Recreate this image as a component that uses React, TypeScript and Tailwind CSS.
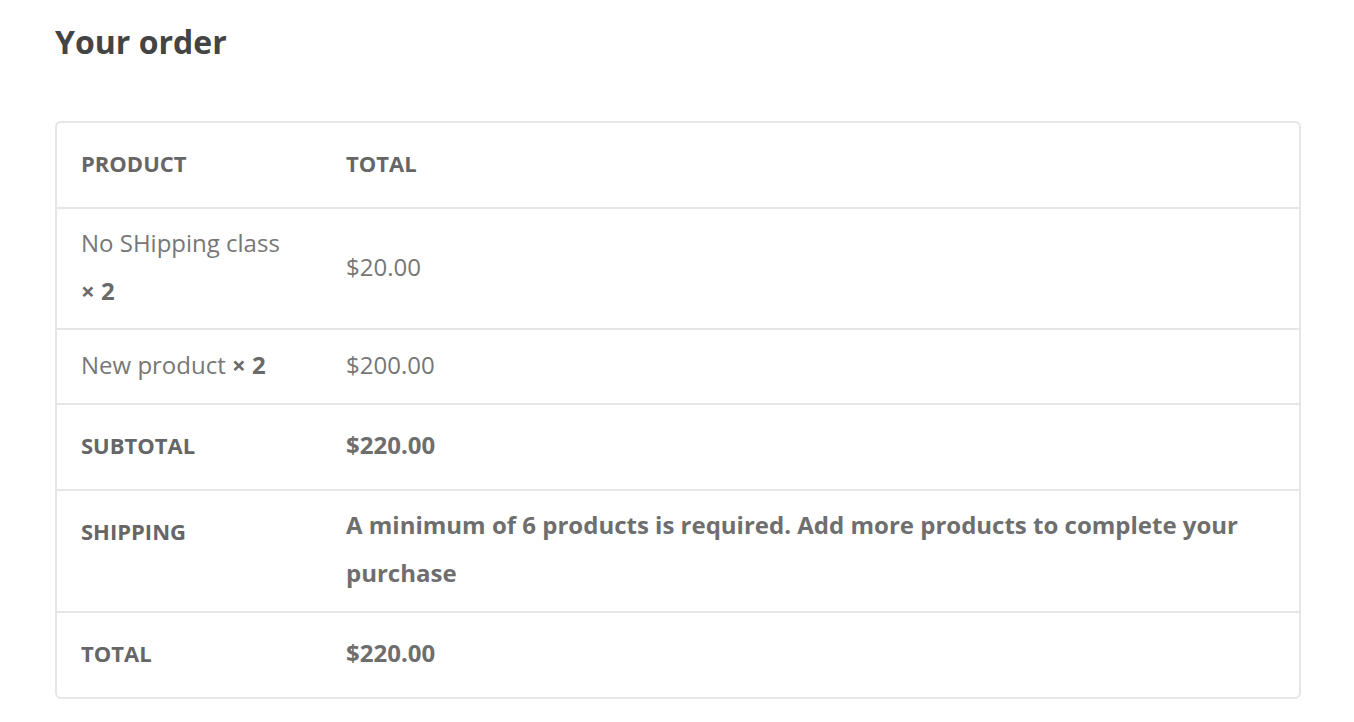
import React from "react";

const font = { fontFamily: '"Open Sans", "Noto Sans", sans-serif' };

const TH = "pl-[24px] pr-[25px] pt-[10px] pb-[14px] text-[22px] font-bold uppercase leading-[60px] text-[#666666]";
const ROW = "grid grid-cols-[265px_1fr] border-b-2 border-[#e6e6e6]";

export default function App() {
  return (
    <div className="min-h-[722px] bg-white pl-[55px] pr-[53px] pt-[22px]" style={font}>
      <h2 className="text-[32px] font-bold leading-[40px] text-[#444444]">Your order</h2>
      <div className="mt-[59px] overflow-hidden rounded-[6px] border-2 border-[#e6e6e6]">
        {/* header */}
        <div className={ROW}>
          <div className={TH}>Product</div>
          <div className={TH}>Total</div>
        </div>
        {/* body rows */}
        <div className={ROW}>
          <div className="pl-[24px] pr-[25px] pt-[10px] pb-[13px] text-[24px] leading-[48px] text-[#777777]">
            No SHipping class <strong className="whitespace-nowrap font-bold text-[#6a6a6a]">× 2</strong>
          </div>
          <div className="flex items-center pl-[24px] pr-[25px] pt-[10px] pb-[13px] text-[24px] leading-[48px] text-[#777777]">$20.00</div>
        </div>
        <div className={ROW}>
          <div className="pl-[24px] pr-[25px] pt-[11px] pb-[14px] text-[24px] leading-[48px] text-[#777777]">
            New product <strong className="whitespace-nowrap font-bold text-[#6a6a6a]">× 2</strong>
          </div>
          <div className="flex items-center pl-[24px] pr-[25px] pt-[11px] pb-[14px] text-[24px] leading-[48px] text-[#777777]">$200.00</div>
        </div>
        {/* footer rows */}
        <div className={ROW}>
          <div className={TH}>Subtotal</div>
          <div className="pl-[24px] pr-[25px] pt-[10px] pb-[14px] text-[24px] font-bold leading-[60px] text-[#6e6e6e]">$220.00</div>
        </div>
        <div className={ROW}>
          <div className={TH}>Shipping</div>
          <div className="pl-[24px] pr-[25px] pt-[10px] pb-[14px] text-[24px] font-bold leading-[48px] text-[#6e6e6e]">
            A minimum of 6 products is required. Add more products to complete your purchase
          </div>
        </div>
        <div className="grid grid-cols-[265px_1fr]">
          <div className={TH}>Total</div>
          <div className="pl-[24px] pr-[25px] pt-[10px] pb-[14px] text-[24px] font-bold leading-[60px] text-[#6e6e6e]">$220.00</div>
        </div>
      </div>
    </div>
  );
}
